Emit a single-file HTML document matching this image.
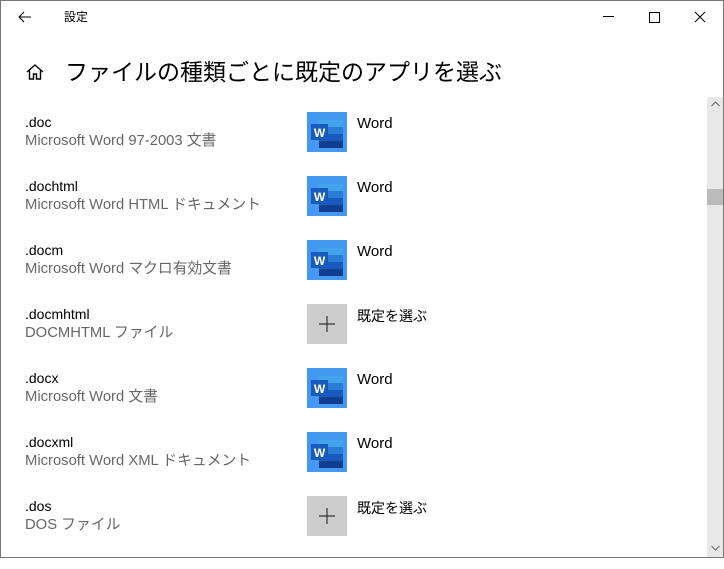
<!DOCTYPE html>
<html><head><meta charset="utf-8"><style>
body{margin:0;width:724px;height:558px;overflow:hidden;background:#fff;font-family:"Liberation Sans","Noto Sans CJK JP",sans-serif;position:relative}
.frame{position:absolute;left:0;top:0;width:722px;height:556px;border:1px solid #777}
.t{position:absolute;white-space:nowrap;line-height:1.15}
.row{position:absolute;left:0;width:700px;height:64px}
.ext{position:absolute;left:25px;top:-8px;font-size:14px;color:#000;line-height:18px}
.desc{position:absolute;left:25px;top:11px;font-size:14.8px;color:#666;line-height:18px;white-space:nowrap}
.ic{position:absolute;left:307px;top:-9px;width:40px;height:40px}
.app{position:absolute;left:357px;top:-6px;font-size:15px;color:#000;line-height:18px}
</style></head><body>
<div class="frame"></div>
<svg class="t" style="left:17px;top:9px" width="16" height="16" viewBox="0 0 16 16"><path d="M14 8H2M7 3L2 8l5 5" fill="none" stroke="#000" stroke-width="1.1"/></svg>
<div class="t" style="left:64px;top:11px;font-size:12px">設定</div>
<div class="t" style="left:603px;top:16px;width:11px;height:1px;background:#000"></div>
<div class="t" style="left:649px;top:12px;width:9px;height:9px;border:1px solid #000"></div>
<svg class="t" style="left:694px;top:11px" width="12" height="12" viewBox="0 0 12 12"><path d="M1 1l10 10M11 1L1 11" stroke="#000" stroke-width="1"/></svg>
<svg class="t" style="left:25px;top:62px" width="20" height="20" viewBox="0 0 20 20"><path d="M2 10L10 3l8 7M4.5 8v9h4v-5h3v5h4V8" fill="none" stroke="#000" stroke-width="1.4"/></svg>
<div class="t" style="left:65px;top:59px;font-size:23px;color:#000">ファイルの種類ごとに既定のアプリを選ぶ</div>
<div class="t" style="left:707px;top:97px;width:16px;height:460px;background:#e8e8e8"></div>
<div class="t" style="left:707px;top:189px;width:16px;height:16px;background:#bbb"></div>
<svg class="t" style="left:711px;top:101px" width="9" height="6"><path d="M0.5 5L4.5 1l4 4" fill="none" stroke="#666"/></svg>
<svg class="t" style="left:711px;top:545px" width="9" height="6"><path d="M0.5 1L4.5 5l4-4" fill="none" stroke="#666"/></svg>

<div class="row" style="top:121px"><div class="ext">.doc</div><div class="desc">Microsoft Word 97-2003 文書</div><svg class="ic"><use href="#w"/></svg><div class="app">Word</div></div>
<div class="row" style="top:185px"><div class="ext">.dochtml</div><div class="desc">Microsoft Word HTML ドキュメント</div><svg class="ic"><use href="#w"/></svg><div class="app">Word</div></div>
<div class="row" style="top:249px"><div class="ext">.docm</div><div class="desc">Microsoft Word マクロ有効文書</div><svg class="ic"><use href="#w"/></svg><div class="app">Word</div></div>
<div class="row" style="top:313px"><div class="ext">.docmhtml</div><div class="desc">DOCMHTML ファイル</div><svg class="ic"><use href="#p"/></svg><div class="app" style="font-size:14px">既定を選ぶ</div></div>
<div class="row" style="top:377px"><div class="ext">.docx</div><div class="desc">Microsoft Word 文書</div><svg class="ic"><use href="#w"/></svg><div class="app">Word</div></div>
<div class="row" style="top:441px"><div class="ext">.docxml</div><div class="desc">Microsoft Word XML ドキュメント</div><svg class="ic"><use href="#w"/></svg><div class="app">Word</div></div>
<div class="row" style="top:505px"><div class="ext">.dos</div><div class="desc">DOS ファイル</div><svg class="ic"><use href="#p"/></svg><div class="app" style="font-size:14px">既定を選ぶ</div></div>

<svg width="0" height="0" style="position:absolute"><defs>
<g id="w"><rect width="40" height="40" fill="#4399f0"/>
<rect x="12" y="8" width="24" height="8" fill="#41a5ee"/>
<rect x="12" y="15" width="24" height="8" fill="#2b7cd3"/>
<rect x="12" y="22" width="24" height="8" fill="#185abd"/>
<rect x="12" y="29" width="24" height="7" fill="#103f91"/>
<rect x="4" y="12" width="17" height="16" fill="#185abd"/>
<text x="12.5" y="25" font-family="Liberation Sans" font-weight="bold" font-size="12" fill="#fff" text-anchor="middle">W</text></g>
<g id="p"><rect width="40" height="40" fill="#ccc"/><path d="M20 12v16M12 20h16" stroke="#333" stroke-width="1.2"/></g>
</defs></svg>
</body></html>
